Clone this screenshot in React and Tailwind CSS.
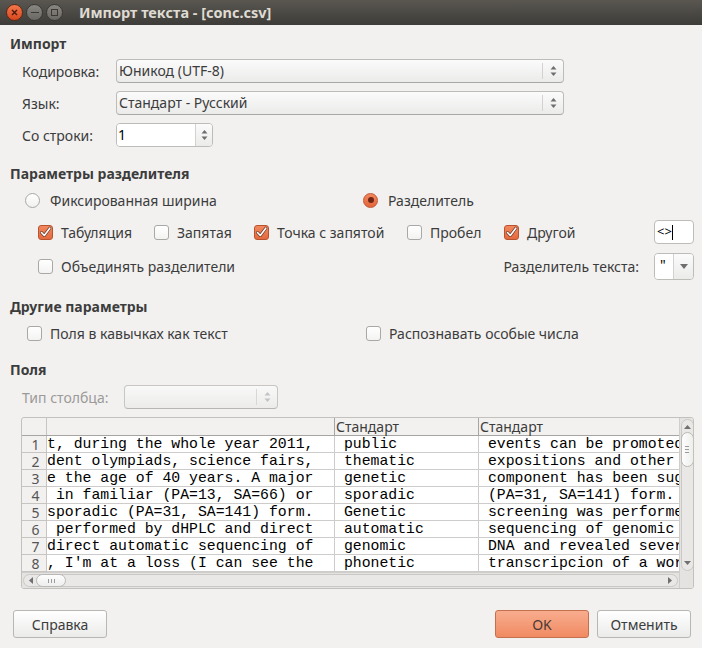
import React from 'react';

const rows = [
  ['t, during the whole year 2011, ', ' public', ' events can be promoted by'],
  ['dent olympiads, science fairs, ', ' thematic', ' expositions and other'],
  ['e the age of 40 years. A major ', ' genetic', ' component has been suggested'],
  [' in familiar (PA=13, SA=66) or ', ' sporadic', ' (PA=31, SA=141) form.'],
  ['sporadic (PA=31, SA=141) form. ', ' Genetic', ' screening was performed'],
  [' performed by dHPLC and direct ', ' automatic', ' sequencing of genomic'],
  ['direct automatic sequencing of ', ' genomic', ' DNA and revealed several'],
  [", I'm at a loss (I can see the ", ' phonetic', ' transcripcion of a word'],
  ['  after I divide the word by it', ' syllables', ' into syllables, and it'],
];

const UpDown = ({ disabled = false }) => (
  <svg width="7" height="12" viewBox="0 0 7 12">
    <path d="M0.5 4.5 L3.5 1 L6.5 4.5 Z" fill={disabled ? '#b8b8b8' : '#6e6e6e'} />
    <path d="M0.5 7.5 L3.5 11 L6.5 7.5 Z" fill={disabled ? '#b8b8b8' : '#6e6e6e'} />
  </svg>
);

const Combo = ({ value, className = '', disabled = false }) => (
  <div
    className={`h-[24px] flex items-center rounded-[4px] border border-[#bdbcb9] border-b-[#a9a8a5] bg-gradient-to-b from-[#fbfbfb] to-[#ebebea] ${className}`}
  >
    <span className="flex-1 pl-[2px] leading-[20px] text-[#3c3c3c] whitespace-nowrap overflow-hidden">{value}</span>
    <div className="w-px h-[16px] bg-[#d3d2cf]" />
    <div className="w-[20px] flex justify-center">
      <UpDown disabled={disabled} />
    </div>
  </div>
);

const Check = ({ checked }) =>
  checked ? (
    <div className="w-[15px] h-[15px] rounded-[3px] border border-[#b9532e] bg-gradient-to-b from-[#f2875d] to-[#e46a3f] flex items-center justify-center">
      <svg width="13" height="13" viewBox="0 0 13 13">
        <path d="M2.5 6.5 L5.3 9.5 L10.8 2.2" fill="none" stroke="#6a3a28" strokeWidth="3" strokeLinecap="round" strokeLinejoin="round" />
        <path d="M2.5 6.5 L5.3 9.5 L10.8 2.2" fill="none" stroke="#ffffff" strokeWidth="1.6" strokeLinecap="round" strokeLinejoin="round" />
      </svg>
    </div>
  ) : (
    <div className="w-[15px] h-[15px] rounded-[3px] border border-[#a9a8a5] bg-gradient-to-b from-[#ffffff] to-[#f3f3f2]" />
  );

const Radio = ({ checked }) =>
  checked ? (
    <div className="w-[15px] h-[15px] rounded-full border border-[#c0552f] bg-gradient-to-b from-[#f2875d] to-[#e4663b] flex items-center justify-center">
      <div className="w-[6px] h-[6px] rounded-full bg-[#6e2714]" />
    </div>
  ) : (
    <div className="w-[15px] h-[15px] rounded-full border border-[#a9a8a5] bg-gradient-to-b from-[#ffffff] to-[#f1f1f0]" />
  );

const CheckItem = ({ checked, label, className = '' }) => (
  <div className={`flex items-center ${className}`}>
    <Check checked={checked} />
    <span className="ml-[8px] whitespace-nowrap">{label}</span>
  </div>
);

const Button = ({ children, primary = false, className = '' }) => (
  <div
    className={`w-[94px] h-[28px] rounded-[3px] border flex items-center justify-center ${
      primary
        ? 'border-[#c4704f] bg-gradient-to-b from-[#f8ad8e] to-[#f08a62] text-[#4a3a33]'
        : 'border-[#b8b7b4] bg-gradient-to-b from-[#ffffff] to-[#ebebea] text-[#3c3c3c]'
    } ${className}`}
  >
    {children}
  </div>
);

const TitleBar = () => (
  <div className="h-[25px] flex items-center bg-gradient-to-b from-[#5a5751] to-[#3d3c38] shrink-0">
    <div className="ml-[6px] w-[17px] h-[17px] rounded-full bg-gradient-to-b from-[#f2774a] to-[#d9461c] border border-[#5a2a18] flex items-center justify-center">
      <svg width="7" height="7" viewBox="0 0 7 7">
        <path d="M1 1 L6 6 M6 1 L1 6" stroke="#4a1a0c" strokeWidth="1.4" />
      </svg>
    </div>
    <div className="ml-[3px] w-[17px] h-[17px] rounded-full bg-gradient-to-b from-[#8a8781] to-[#6a6863] border border-[#3a3935] flex items-center justify-center">
      <div className="w-[8px] h-[1.5px] bg-[#3a3935]" />
    </div>
    <div className="ml-[3px] w-[17px] h-[17px] rounded-full bg-gradient-to-b from-[#8a8781] to-[#6a6863] border border-[#3a3935] flex items-center justify-center">
      <div className="w-[7px] h-[7px] border-[1.4px] border-[#3a3935]" />
    </div>
    <span className="ml-[16px] font-bold text-[14.5px] text-[#dfdbd2] whitespace-nowrap">Импорт текста - [conc.csv]</span>
  </div>
);

const DataTable = () => (
  <div className="ml-[11px] w-[673px] h-[172px] rounded-[3px] border border-[#c2c1be] bg-[#f2f1f0] flex overflow-hidden">
    <div className="w-[658px] flex flex-col relative">
      <div className="h-[157px] overflow-hidden">
        {/* header */}
        <div className="flex h-[18px] border-b border-[#a6a5a2] text-[14px] text-[#3c3c3c] leading-[17px]">
          <div className="w-[25px] shrink-0 border-r border-[#c6c5c2]" />
          <div className="w-[288px] shrink-0 border-r border-[#a6a5a2]" />
          <div className="w-[144px] shrink-0 pl-[1px] border-r border-[#a6a5a2]">Стандарт</div>
          <div className="w-[200px] shrink-0 pl-[1px]">Стандарт</div>
        </div>
        {rows.map((r, i) => (
          <div key={i} className="flex h-[17px]">
            <div className="w-[25px] shrink-0 border-r border-b border-[#c6c5c2] text-center text-[14px] leading-[17px] text-[#555555] pl-[3px]">
              {i + 1}
            </div>
            {r.map((c, j) => (
              <div
                key={j}
                className={`${j === 0 ? 'w-[288px]' : j === 1 ? 'w-[144px]' : 'w-[200px]'} shrink-0 bg-white border-b border-[#cdcccb] ${
                  j < 2 ? 'border-r' : ''
                } font-['Liberation_Mono',monospace] text-[14.8px] leading-[16px] text-black whitespace-pre overflow-hidden`}
              >
                {c}
              </div>
            ))}
          </div>
        ))}
      </div>
      {/* horizontal scrollbar */}
      <div className="absolute left-0 right-0 bottom-0 h-[16px] border-t border-[#cfcecb] bg-[#e4e3e1] flex items-center px-[1px]">
        <div className="h-[13px] flex-1 rounded-full border border-[#c9c8c5] bg-[#e9e8e6] flex items-center">
          <svg className="ml-[5px]" width="4" height="7" viewBox="0 0 4 7">
            <path d="M4 0 L0 3.5 L4 7 Z" fill="#707070" />
          </svg>
          <div className="ml-[3px] w-[30px] h-[13px] rounded-full border border-[#b9b8b5] bg-gradient-to-b from-[#fdfdfd] to-[#eeeeed] flex items-center justify-center">
            <svg width="7" height="4" viewBox="0 0 7 4">
              <path d="M0.5 0 V4 M3.5 0 V4 M6.5 0 V4" stroke="#9a9a9a" strokeWidth="1" />
            </svg>
          </div>
          <div className="flex-1" />
          <svg className="mr-[5px]" width="4" height="7" viewBox="0 0 4 7">
            <path d="M0 0 L4 3.5 L0 7 Z" fill="#707070" />
          </svg>
        </div>
      </div>
    </div>
    {/* vertical scrollbar */}
    <div className="w-[15px] shrink-0 border-l border-[#cfcecb] bg-[#e4e3e1] flex flex-col items-center pt-[1px] pb-[17px]">
      <div className="w-[13px] flex-1 rounded-full border border-[#c9c8c5] bg-[#e9e8e6] flex flex-col items-center">
        <svg className="mt-[5px]" width="7" height="4" viewBox="0 0 7 4">
          <path d="M0 4 L3.5 0 L7 4 Z" fill="#707070" />
        </svg>
        <div className="mt-[3px] w-[13px] h-[35px] rounded-full border border-[#b9b8b5] bg-gradient-to-r from-[#fdfdfd] to-[#eeeeed] flex items-center justify-center">
          <svg width="4" height="7" viewBox="0 0 4 7">
            <path d="M0 0.5 H4 M0 3.5 H4 M0 6.5 H4" stroke="#9a9a9a" strokeWidth="1" />
          </svg>
        </div>
        <div className="flex-1" />
        <svg className="mb-[5px]" width="7" height="4" viewBox="0 0 7 4">
          <path d="M0 0 L3.5 4 L7 0 Z" fill="#707070" />
        </svg>
      </div>
    </div>
  </div>
);

export default function App() {
  return (
    <div className="w-[702px] h-[648px] bg-[#f2f1f0] font-['Noto_Sans',sans-serif] text-[14px] text-[#3c3c3c] overflow-hidden flex flex-col">
      <TitleBar />
      <div className="flex flex-col pl-[10px] pr-[8px]">
        <div className="mt-[9px] h-[20px] leading-[20px] font-bold">Импорт</div>

        <div className="mt-[5px] h-[24px] flex items-center">
          <span className="ml-[12px] w-[94px]">Кодировка:</span>
          <Combo value="Юникод (UTF-8)" className="w-[448px]" />
        </div>
        <div className="mt-[8px] h-[24px] flex items-center">
          <span className="ml-[12px] w-[94px]">Язык:</span>
          <Combo value="Стандарт - Русский" className="w-[448px]" />
        </div>
        <div className="mt-[8px] h-[24px] flex items-center">
          <span className="ml-[12px] w-[94px]">Со строки:</span>
          <div className="w-[97px] h-[24px] flex rounded-[4px] border border-[#bdbcb9] overflow-hidden">
            <div className="w-[78px] bg-white pl-[1px] leading-[22px] text-black">1</div>
            <div className="flex-1 border-l border-[#d3d2cf] bg-gradient-to-b from-[#fbfbfb] to-[#ebebea] flex items-center justify-center">
              <UpDown />
            </div>
          </div>
        </div>

        <div className="mt-[17px] h-[20px] leading-[20px] font-bold">Параметры разделителя</div>
        <div className="mt-[6px] h-[20px] flex items-center">
          <div className="ml-[15px] w-[338px] flex items-center">
            <Radio checked={false} />
            <span className="ml-[10px]">Фиксированная ширина</span>
          </div>
          <Radio checked />
          <span className="ml-[10px]">Разделитель</span>
        </div>

        <div className="mt-[10px] h-[24px] flex items-center">
          <CheckItem className="ml-[28px] w-[116px]" checked label="Табуляция" />
          <CheckItem className="w-[100px]" checked={false} label="Запятая" />
          <CheckItem className="w-[153px]" checked label="Точка с запятой" />
          <CheckItem className="w-[97px]" checked={false} label="Пробел" />
          <CheckItem className="flex-1" checked label="Другой" />
          <div className="w-[40px] h-[24px] rounded-[4px] border border-[#bdbcb9] bg-white flex items-center pl-[2px] text-black text-[13px]">
            {'<>'}
            <div className="w-[1.5px] h-[15px] bg-black" />
          </div>
        </div>

        <div className="mt-[9px] h-[27px] flex items-center">
          <CheckItem className="ml-[28px] flex-1" checked={false} label="Объединять разделители" />
          <span className="mr-[15px]">Разделитель текста:</span>
          <div className="w-[40px] h-[27px] rounded-[4px] border border-[#bdbcb9] flex overflow-hidden">
            <div className="w-[18px] bg-white pl-[5px] leading-[22px] text-black">"</div>
            <div className="flex-1 border-l border-[#d3d2cf] bg-gradient-to-b from-[#fbfbfb] to-[#ebebea] flex items-center justify-center">
              <svg width="8" height="5" viewBox="0 0 8 5">
                <path d="M0 0 L4 5 L8 0 Z" fill="#6e6e6e" />
              </svg>
            </div>
          </div>
        </div>

        <div className="mt-[17px] h-[20px] leading-[20px] font-bold">Другие параметры</div>
        <div className="mt-[6px] h-[20px] flex items-center">
          <CheckItem className="ml-[17px] w-[339px]" checked={false} label="Поля в кавычках как текст" />
          <CheckItem checked={false} label="Распознавать особые числа" />
        </div>

        <div className="mt-[17px] h-[20px] leading-[20px] font-bold">Поля</div>
        <div className="mt-[5px] h-[24px] flex items-center">
          <span className="ml-[12px] w-[102px] text-[#9b9a98]">Тип столбца:</span>
          <Combo value="" disabled className="w-[154px] opacity-80" />
        </div>

        <div className="mt-[8px]">
          <DataTable />
        </div>
      </div>

      <div className="mt-[21px] flex items-center pl-[13px] pr-[11px]">
        <Button>Справка</Button>
        <div className="flex-1" />
        <Button primary>OK</Button>
        <Button className="ml-[8px]">Отменить</Button>
      </div>
    </div>
  );
}
